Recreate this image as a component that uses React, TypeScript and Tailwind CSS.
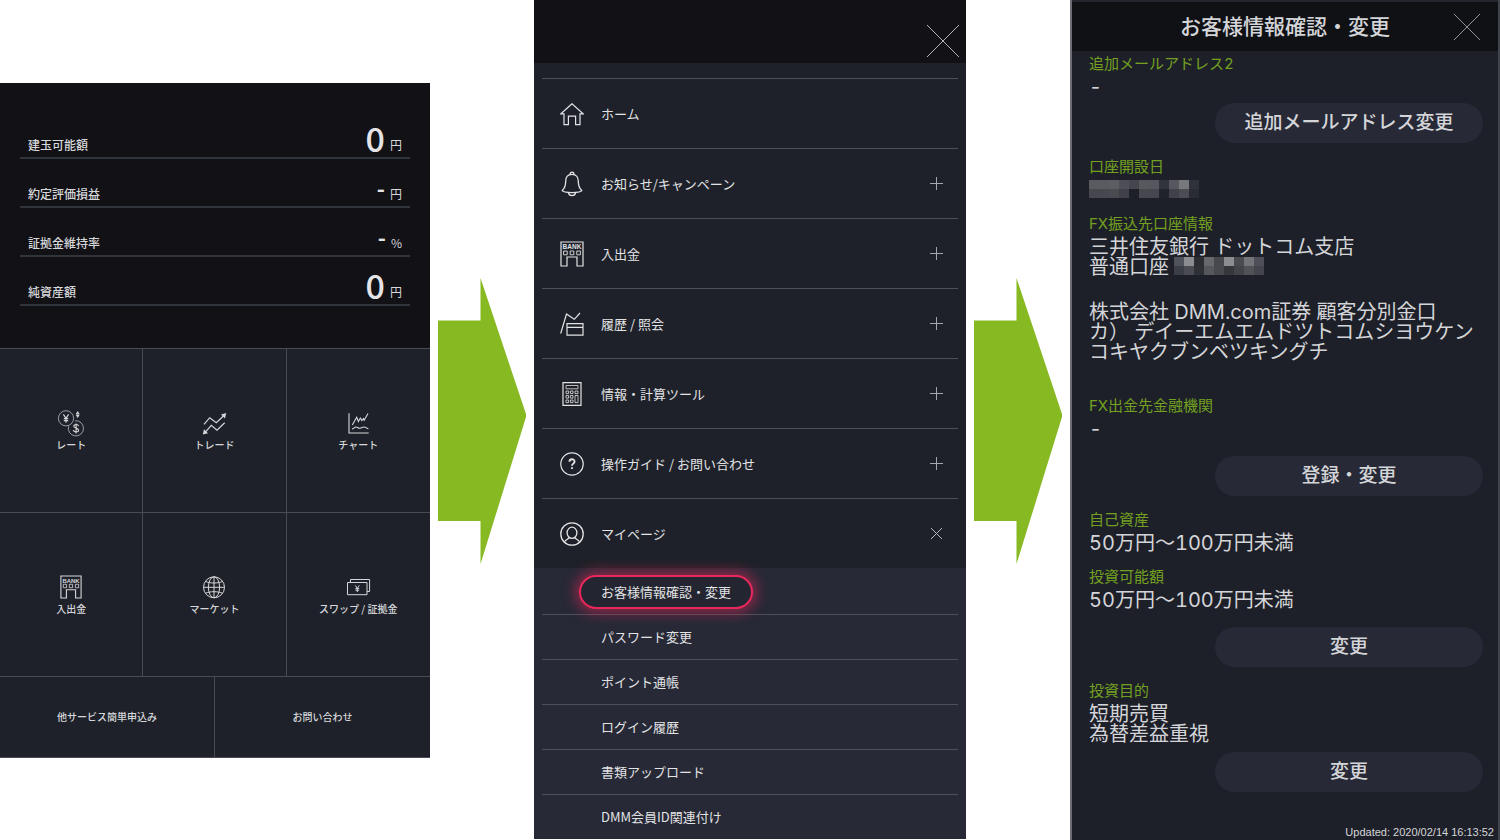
import type { ReactNode } from 'react';

const balances = [
  { label: '建玉可能額', value: '0', unit: '円' },
  { label: '約定評価損益', value: '-', unit: '円' },
  { label: '証拠金維持率', value: '-', unit: '%' },
  { label: '純資産額', value: '0', unit: '円' },
];

const subMenu = ['パスワード変更', 'ポイント通帳', 'ログイン履歴', '書類アップロード', 'DMM会員ID関連付け'];

function RateIcon() {
  return (
    <svg viewBox="0 0 28 28" className="size-7" fill="none" stroke="currentColor">
      <circle cx="9" cy="9.3" r="7.6" strokeWidth="0.9" opacity="0.75" />
      <path d="M18 11.8a7.6 7.6 0 1 1-6.4 5.5" strokeWidth="0.9" opacity="0.75" />
      <path d="M6.4 5.4L9 9.4l2.6-4M9 9.4v4.4M6.8 9.6h4.4M6.8 11.6h4.4" strokeWidth="1.1" />
      <path d="M21.6 17.1c-.5-2.3-5-2-4.8.2.2 2.2 4.9 1.5 4.8 3.9-.1 2.3-5 2.3-5.2-.2M19.1 14.4v10" strokeWidth="1.1" />
      <path d="M20.7 2l2 3.2h-4zM20.7 9l2-3.200h-4z" fill="currentColor" stroke="none" />
    </svg>
  );
}

function TradeIcon() {
  return (
    <svg viewBox="0 0 28 28" className="size-7" fill="none" stroke="currentColor" strokeWidth="1.2">
      <path d="M4 15.3l5.7-6.6 6.6 5L23.4 7M24.7 13.7L17 21.3l-5.7-5L5.8 22.6" />
      <path d="M26.2 4l-1.2 5.4-4-4zM2.8 25.6l1.2-5.4 4 4z" fill="currentColor" stroke="none" />
    </svg>
  );
}

function ChartIcon() {
  return (
    <svg viewBox="0 0 28 28" className="size-7" fill="none" stroke="currentColor" strokeWidth="1.1">
      <path d="M5 4.3V24h19.7" />
      <path d="M8.3 16l4.4-7.8 1.7 4.2 2-3.4 1.4 2.6 1.8-2 .6 1.6L24 4.6" />
      <path d="M8 20c1.6 0 2.2-2 4-2s2.4 1.6 4 1.2 2-1.2 4-1.2 2.6 1.6 4.4 1.8" />
    </svg>
  );
}

function BankIcon({ className }: { className: string }) {
  return (
    <svg viewBox="0 0 24 26" className={className} fill="none" stroke="currentColor">
      <path d="M1 1h22v24h-6v-9H7v9H1z" strokeWidth="1.2" />
      <path d="M3.6 10h3.600v3.800H3.600zM10.200 10h3.600v3.800h-3.600zM16.800 10h3.600v3.800h-3.600z" strokeWidth="0.9" />
      <text x="12" y="8.200" textAnchor="middle" fontSize="6.500" fontWeight="700" fill="currentColor" stroke="none" fontFamily="Liberation Sans, sans-serif">BANK</text>
    </svg>
  );
}

function GlobeIcon() {
  return (
    <svg viewBox="0 0 28 28" className="size-7" fill="none" stroke="currentColor" strokeWidth="1">
      <circle cx="14" cy="14.300" r="10.500" />
      <ellipse cx="14" cy="14.300" rx="5.600" ry="10.500" />
      <path d="M14 3.800v21M3.500 14.300h21M5.600 8.500c4.500 2 12.300 2 16.800 0M5.600 20.200c4.500-2 12.300-2 16.800 0" />
    </svg>
  );
}

function MoneyIcon() {
  return (
    <svg viewBox="0 0 28 28" className="size-7" fill="none" stroke="currentColor" strokeWidth="1">
      <path d="M3.500 9.500H23v12.200H3.500z" />
      <path d="M6.500 9.500v-3H25.600v12H23" />
      <path d="M11.300 12.400l2 3 2-3M13.300 15.400v3.600M11.400 15.600h3.800M11.400 17.200h3.800" />
    </svg>
  );
}

function HomeIcon() {
  return (
    <svg viewBox="0 0 24 24" className="size-6" fill="none" stroke="currentColor" strokeWidth="1.2">
      <path d="M12 1.700L.9 11.800H4v10.800h4.400v-8.400h7.200v8.400H20V11.800h3.100z" />
    </svg>
  );
}

function BellIcon() {
  return (
    <svg viewBox="0 0 24 26" className="h-[26px] w-6" fill="none" stroke="currentColor" strokeWidth="1.3">
      <path d="M12 3.300c-4.300 0-6.300 3.200-6.300 7 0 5.600-1.100 7.300-3.500 9.300.6 1.400 4.800 2 9.800 2s9.200-.6 9.800-2c-2.400-2-3.500-3.700-3.500-9.300 0-3.800-2-7-6.300-7z" />
      <path d="M10 3.400c0-3 4-3 4 0M8.400 21.600c.6 4 6.600 4 7.200 0" />
    </svg>
  );
}

function HistoryIcon() {
  return (
    <svg viewBox="0 0 24 24" className="size-6" fill="none" stroke="currentColor" strokeWidth="1.2">
      <path d="M.7 21.500L6.500 2l7.800 5.300L20 1M7 11.700h16v11.400H7zM7 15.400h16" />
    </svg>
  );
}

function CalcIcon() {
  return (
    <svg viewBox="0 0 24 24" className="size-6" fill="none" stroke="currentColor">
      <path d="M3 .6h18v22.800H3z" strokeWidth="1.2" />
      <path
        d="M6 3.500h12v3.300H6zM6 9h2.600v2.600H6zM10.400 9H13v2.600h-2.600zM15 9h3v2.600h-3zM6 13.500h2.600v2.600H6zM10.400 13.500H13v2.600h-2.600zM6 18h2.600v2.600H6zM10.400 18H13v2.600h-2.600zM15 13.500h3v7.100h-3z"
        strokeWidth="0.8"
      />
    </svg>
  );
}

function HelpIcon() {
  return (
    <svg viewBox="0 0 24 24" className="size-6" fill="none" stroke="currentColor" strokeWidth="1.2">
      <circle cx="12" cy="12" r="11.200" />
      <path d="M9.400 9.700c.1-3.300 5.300-3.200 5.200-.1 0 2-2.600 2-2.600 4.100" strokeWidth="1.8" />
      <circle cx="12" cy="16.100" r="1.100" fill="currentColor" stroke="none" />
    </svg>
  );
}

function UserIcon() {
  return (
    <svg viewBox="0 0 24 24" className="size-6" fill="none" stroke="currentColor" strokeWidth="1.3">
      <circle cx="12" cy="12" r="11.200" />
      <ellipse cx="12" cy="10.800" rx="4.900" ry="5.600" />
      <path d="M9.200 15.400c-.3 1.900-3.800 1.800-4.700 4.700M14.800 15.400c.3 1.900 3.800 1.800 4.700 4.700" />
    </svg>
  );
}

function CrossIcon({ className }: { className: string }) {
  return (
    <svg viewBox="0 0 32 32" className={className} fill="none" stroke="currentColor">
      <path d="M0 0l32 32M32 0L0 32" vectorEffect="non-scaling-stroke" />
    </svg>
  );
}

function PlusIcon() {
  return (
    <svg viewBox="0 0 13 13" className="size-[13px] text-[#a5a6ab]" fill="none" stroke="currentColor">
      <path d="M6.500 0v13M0 6.500h13" />
    </svg>
  );
}

function Arrow() {
  return (
    <svg viewBox="0 -2 88 288" className="mx-2 w-[88px] shrink-0 self-center" fill="#86b922">
      <path d="M0 42.500H42.500V0L88.500 137.500L42.500 286V243H0z" />
    </svg>
  );
}

const tiles = [
  { label: 'レート', icon: <RateIcon /> },
  { label: 'トレード', icon: <TradeIcon /> },
  { label: 'チャート', icon: <ChartIcon /> },
  { label: '入出金', icon: <BankIcon className="h-7 w-[22px] py-[2px]" /> },
  { label: 'マーケット', icon: <GlobeIcon /> },
  { label: 'スワップ / 証拠金', icon: <MoneyIcon /> },
];

const menu = [
  { label: 'ホーム', icon: <HomeIcon />, mark: null },
  { label: 'お知らせ/キャンペーン', icon: <BellIcon />, mark: <PlusIcon /> },
  { label: '入出金', icon: <BankIcon className="h-[26px] w-6" />, mark: <PlusIcon /> },
  { label: '履歴 / 照会', icon: <HistoryIcon />, mark: <PlusIcon /> },
  { label: '情報・計算ツール', icon: <CalcIcon />, mark: <PlusIcon /> },
  { label: '操作ガイド / お問い合わせ', icon: <HelpIcon />, mark: <PlusIcon /> },
  { label: 'マイページ', icon: <UserIcon />, mark: <CrossIcon className="mr-px size-[11px] text-[#b5b6ba]" /> },
];

function HomePanel() {
  return (
    <section className="min-w-0 flex-[430] self-center bg-[#1e2129] text-[#d6d7da]">
      <dl className="bg-[#111116] px-5 pt-[27px] pb-[42px]">
        {balances.map((b) => (
          <div key={b.label} className="flex h-[49px] items-end justify-between border-b-2 border-[#30343d] px-2 pb-1">
            <dt className="text-[12px] leading-4 font-medium">{b.label}</dt>
            <dd className="flex items-end gap-[5px] text-[12px] leading-4">
              {b.value === '0' ? (
                <span className="text-[34px] leading-[30px] font-medium text-[#e4e4e7]">0</span>
              ) : (
                <span className="text-[22px] leading-[30px] font-bold text-[#e4e4e7]">-</span>
              )}
              {b.unit}
            </dd>
          </div>
        ))}
      </dl>
      <nav>
        <div className="grid grid-cols-3">
          {tiles.map((t) => (
            <a
              key={t.label}
              href="#"
              className="flex h-[164px] flex-col items-center border-t border-r border-[#484b54] pt-15 text-[10px] leading-4 font-medium [&:nth-child(3n)]:border-r-0"
            >
              {t.icon}
              {t.label}
            </a>
          ))}
        </div>
        <div className="grid grid-cols-2 border-t border-b border-[#484b54] text-[10px] font-medium">
          <a href="#" className="flex h-20 items-center justify-center border-r border-[#484b54]">他サービス簡単申込み</a>
          <a href="#" className="flex h-20 items-center justify-center">お問い合わせ</a>
        </div>
      </nav>
    </section>
  );
}

function MenuPanel() {
  return (
    <section className="min-w-0 flex-[432] self-start bg-[#1e2129] text-[13px] text-[#e2e3e5]">
      <header className="flex h-[63px] justify-end bg-[#111116] pt-[25px] pr-[7px]">
        <button type="button" aria-label="閉じる" className="size-8 text-[#b4b4b8]">
          <CrossIcon className="size-8" />
        </button>
      </header>
      <ul className="mx-2 pt-[15px]">
        {menu.map((m) => (
          <li key={m.label} className="border-t border-[#4d5059]">
            <a href="#" className="flex h-[69px] items-center pr-[15px] pl-[18px]">
              {m.icon}
              <span className="ml-[17px] flex-1">{m.label}</span>
              {m.mark}
            </a>
          </li>
        ))}
      </ul>
      <ul className="bg-[#272936] px-2 pt-0.5">
        <li className="flex h-11 items-center pl-[37px]">
          <a
            href="#"
            className="relative flex h-[34px] items-center rounded-full border-2 border-[#e8275a] bg-[#232530] px-5 shadow-[0_0_14px_3px_rgba(232,39,90,0.6)]"
          >
            お客様情報確認・変更
          </a>
        </li>
        {subMenu.map((s) => (
          <li key={s} className="border-t border-[#4d5059]">
            <a href="#" className="flex h-11 items-center pl-[59px]">{s}</a>
          </li>
        ))}
      </ul>
    </section>
  );
}

function Mosaic({ rows }: { rows: string[][] }) {
  return (
    <span aria-hidden="true" className="inline-block align-top">
      {rows.map((cells, r) => (
        <span key={r} className="flex">
          {cells.map((color, i) => (
            <span key={i} className="h-[9px] w-[10px]" style={{ backgroundColor: color }} />
          ))}
        </span>
      ))}
    </span>
  );
}

const dateMosaic = [
  ['#5a5b61', '#5a5b61', '#5c5d63', '#4e4f56', '#44454d', '#57585e', '#56575e', '#31333d', '#57585f', '#77787c', '#2f313b'],
  ['#47484f', '#47484f', '#4a4b51', '#3f4049', '#1e2029', '#46474f', '#45464e', '#21232c', '#404149', '#4c4d54', '#292b35'],
];

const accountMosaic = [
  ['#50525a', '#8c8d90', '#2c2e34', '#67686c', '#47484e', '#8c8d90', '#4a4b50', '#737478', '#4f5057'],
  ['#3c3e47', '#4b4c53', '#2e3037', '#56575c', '#48494f', '#36373d', '#43444a', '#515258', '#45464d'],
];

function Field({ label, children }: { label: string; children: ReactNode }) {
  return (
    <div className="mt-[11px] first:mt-0">
      <h3 className="text-[15px] leading-[26px] text-[#73a020]">{label}</h3>
      <div className="text-[20px] leading-5">{children}</div>
    </div>
  );
}

function ChangeButton({ className, children }: { className: string; children: ReactNode }) {
  return (
    <div className={`flex justify-end ${className}`}>
      <button type="button" className="h-10 w-[268px] rounded-full bg-[#272a36] text-[19px] font-medium">
        {children}
      </button>
    </div>
  );
}

function InfoPanel() {
  return (
    <div className="flex min-w-0 flex-[430]">
      <section className='flex w-full flex-col border-r-2 border-l-2 border-r-[#42444d] border-l-[#6c6d75] bg-[#1e2029] font-["Inter","Noto_Sans_CJK_JP",sans-serif] text-[#d4d5d8]'>
        <header className="grid h-[51px] grid-cols-[44px_1fr_44px] items-center border-t-2 border-[#24262e] bg-[#101115]">
          <h2 className="col-start-2 text-center text-[21px] leading-6 font-medium">お客様情報確認・変更</h2>
          <button type="button" aria-label="閉じる" className="size-[26px] text-[#8f9095]">
            <CrossIcon className="size-[26px]" />
          </button>
        </header>
        <div className="pr-[15px] pl-[17px] tabular-nums">
          <Field label="追加メールアドレス2">-</Field>
          <ChangeButton className="mt-1.5">追加メールアドレス変更</ChangeButton>
          <Field label="口座開設日">
            <Mosaic rows={dateMosaic} />
          </Field>
          <Field label="FX振込先口座情報">
            <p>三井住友銀行 ドットコム支店</p>
            <p>
              普通口座 <Mosaic rows={accountMosaic} />
            </p>
            <p className="mt-[25px] mb-[31px]">
              株式会社 DMM.com証券 顧客分別金口
              <br />
              カ） デイーエムエムドツトコムシヨウケン
              <br />
              コキヤクブンベツキングチ
            </p>
          </Field>
          <Field label="FX出金先金融機関">-</Field>
          <ChangeButton className="mt-[17px]">登録・変更</ChangeButton>
          <Field label="自己資産">50万円〜100万円未満</Field>
          <Field label="投資可能額">50万円〜100万円未満</Field>
          <ChangeButton className="mt-[17px]">変更</ChangeButton>
          <Field label="投資目的">
            短期売買
            <br />
            為替差益重視
          </Field>
          <ChangeButton className="mt-2">変更</ChangeButton>
        </div>
        <p className='mt-auto pt-7 pr-1 text-right font-["Liberation_Sans",sans-serif] text-[11px] leading-4'>
          Updated: 2020/02/14 16:13:52
        </p>
      </section>
    </div>
  );
}

export default function App() {
  return (
    <main className='flex min-h-screen w-full bg-white font-["Noto_Sans_CJK_JP",sans-serif]'>
      <HomePanel />
      <Arrow />
      <MenuPanel />
      <Arrow />
      <InfoPanel />
    </main>
  );
}
